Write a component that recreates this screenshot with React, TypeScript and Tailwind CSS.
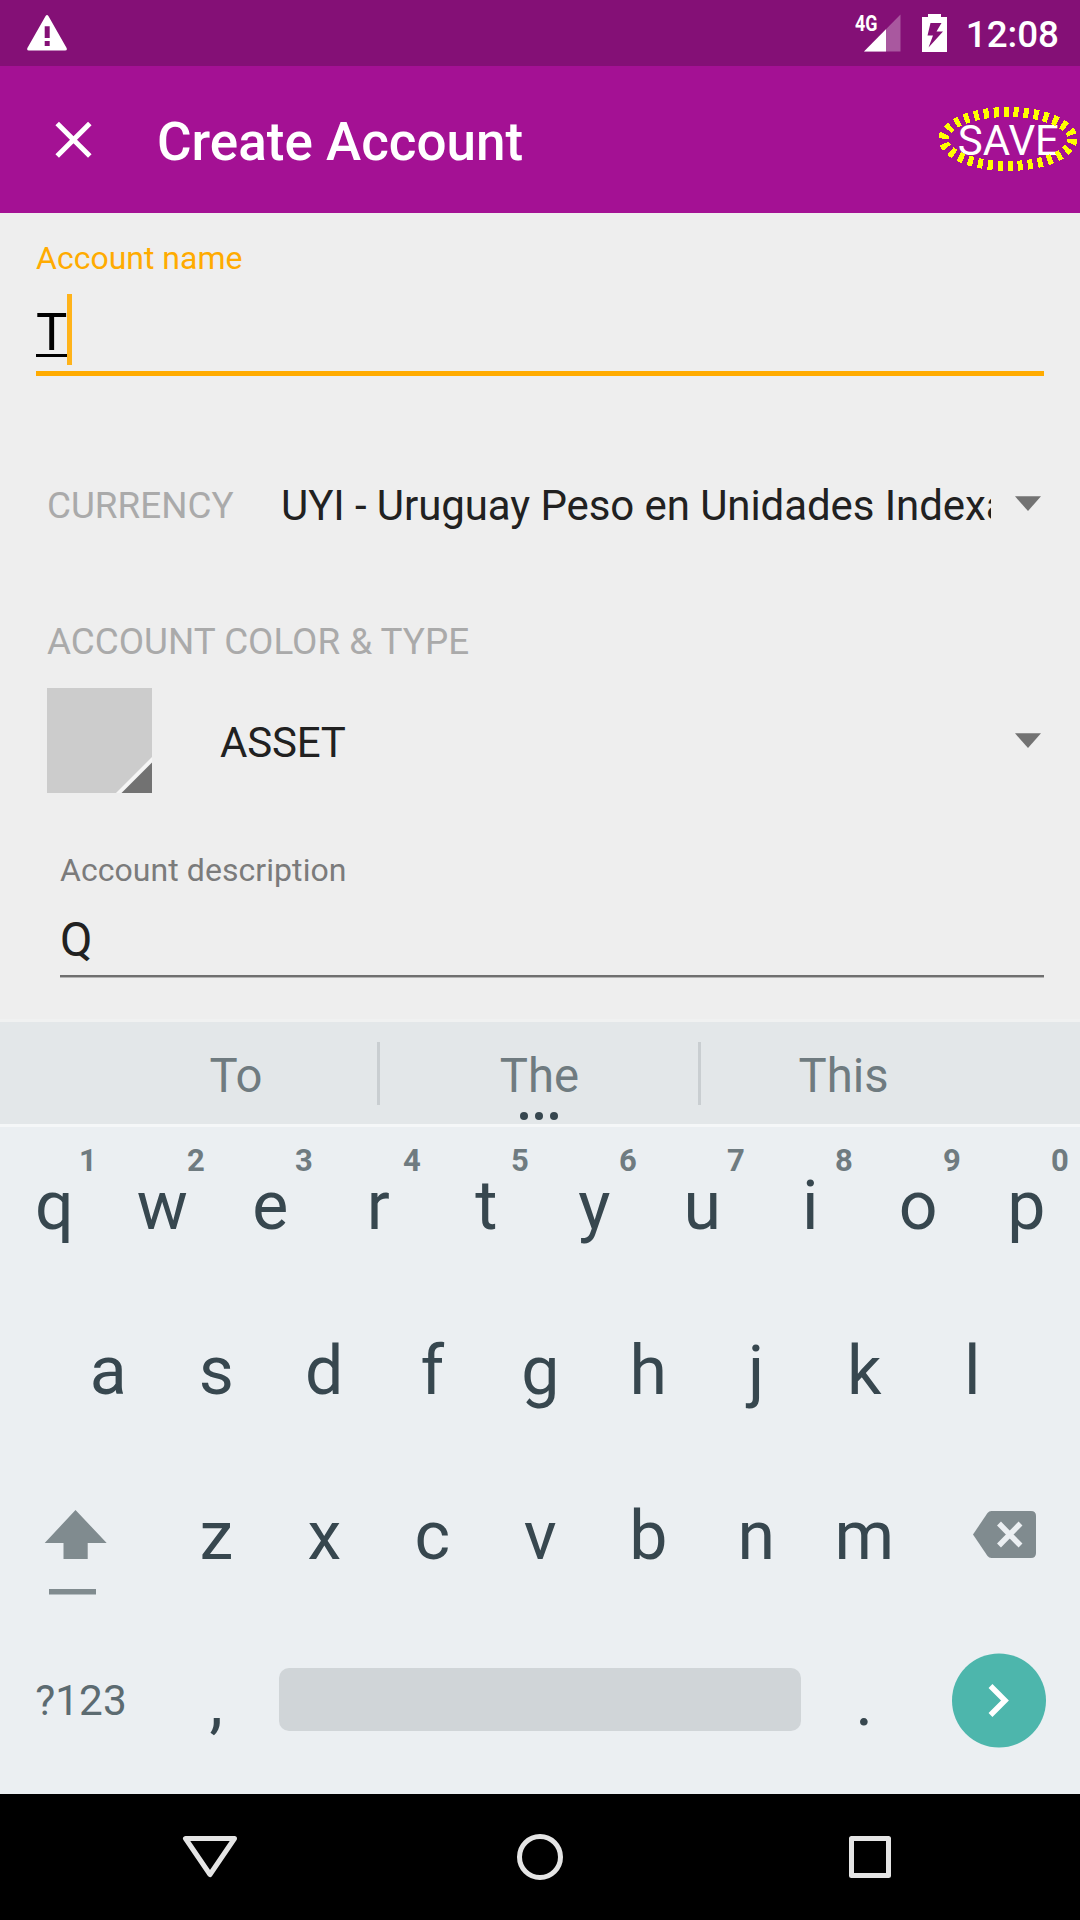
import React from "react";

const TOP_ROW = ["q", "w", "e", "r", "t", "y", "u", "i", "o", "p"];
const HINTS = ["1", "2", "3", "4", "5", "6", "7", "8", "9", "0"];
const HOME_ROW = ["a", "s", "d", "f", "g", "h", "j", "k", "l"];
const BOTTOM_ROW = ["z", "x", "c", "v", "b", "n", "m"];

function StatusBar() {
  return (
    <div className="flex h-[66px] items-start bg-[#841076] text-white">
      <svg className="ml-[27px] mt-[15px]" width="40" height="36" viewBox="0 0 40 36">
        <path
          fill="#fff"
          fillRule="evenodd"
          d="M18.6 1Q20 -1 21.4 1L39.6 33Q40.6 35.600 38 35.600H2Q-.6 35.600 .4 33ZM17.700 11.300V23H22.700V11.300ZM17.700 26V31H22.700V26Z"
        />
      </svg>
      <div className="ml-auto flex items-start">
        <span className="mt-[12px] w-[22px] origin-left scale-x-[0.83] whitespace-nowrap text-[21.500px] font-bold leading-[24px]">
          4G
        </span>
        <svg className="-ml-[13px] mt-[14px]" width="37" height="38" viewBox="0 0 37 38">
          <path fill="#fff" fillOpacity="0.3" d="M0 37.500L36.500 0.500V37.500Z" />
          <path fill="#fff" d="M0 37.500L22 15.200V37.500Z" />
        </svg>
        <svg className="ml-[21px] mt-[14px]" width="25" height="38" viewBox="0 0 25 38">
          <path
            fill="#fff"
            fillRule="evenodd"
            d="M6 0H19V3H25V38H0V3H6ZM8.500 9H19.500L14.500 17.500H21L6.500 33.500L11 21.500H5.500Z"
          />
        </svg>
        <span className="ml-[19px] mr-[21px] mt-[13px] text-[36.750px] font-medium leading-[43px]">12:08</span>
      </div>
    </div>
  );
}

function AppBar() {
  return (
    <div className="flex h-[147px] items-center bg-[#a41194] text-white">
      <svg className="ml-[55px]" width="38" height="38" viewBox="0 0 38 38">
        <path d="M2.200 2.500L34.800 35.100M34.800 2.500L2.200 35.100" stroke="#fff" strokeWidth="5" />
      </svg>
      <h1 className="ml-[64px] pt-[4px] text-[53px] font-medium leading-[60px]">Create Account</h1>
      <div className="relative ml-auto mr-[21px] pt-[2px] text-[42px] leading-[50px]">
        SAVE
        <svg className="absolute -right-[19px] -top-[8px]" width="140" height="66" viewBox="0 0 140 66">
          <ellipse
            cx="70"
            cy="33"
            rx="64.500"
            ry="27"
            fill="none"
            stroke="#ff0"
            strokeWidth="10"
            strokeDasharray="5 5"
            shapeRendering="crispEdges"
          />
        </svg>
      </div>
    </div>
  );
}

function DropArrow() {
  return (
    <svg className="shrink-0" width="26" height="15" viewBox="0 0 26 15">
      <path fill="#727272" d="M0 0.300H26L13 15Z" />
    </svg>
  );
}

function AccountForm() {
  return (
    <div className="flex h-[806px] flex-col bg-[#eee] pt-[27px] text-[#212121]">
      <label className="ml-[36px] text-[32px] leading-[36px] text-[#ffab00]">Account name</label>
      <div className="ml-[36px] mt-[18px] flex h-[71px] items-start">
        <span className="h-[63px] w-[32px] border-b-[3px] border-black text-[52.500px] leading-[76px] text-black">T</span>
        <span className="-ml-px h-[71px] w-[5px] bg-[#ffb31a]" />
      </div>
      <div className="mx-[36px] mt-[6px] h-[5px] shrink-0 bg-[#ffab00]" />

      <div className="ml-[47px] mr-[39px] mt-[100px] flex h-[60px] shrink-0 items-start">
        <span className="w-[234px] text-[36.850px] leading-[60px] text-[#aaa]">CURRENCY</span>
        <span className="w-[710px] overflow-hidden whitespace-nowrap text-[42px] leading-[60px] tracking-[-0.080px]">
          UYI - Uruguay Peso en Unidades Indexa
        </span>
        <span className="ml-auto mt-[20px]">
          <DropArrow />
        </span>
      </div>

      <div className="ml-[47px] mt-[84px] text-[36.850px] leading-[44px] text-[#aaa]">ACCOUNT COLOR &amp; TYPE</div>
      <div className="ml-[47px] mr-[39px] mt-[24px] flex h-[105px] shrink-0 items-center">
        <svg width="105" height="105" viewBox="0 0 105 105">
          <path fill="#ccc" d="M0 0H105V105H0Z" />
          <path fill="#f5f5f5" d="M105 69V105H69Z" />
          <path fill="#727272" d="M105 74.500V105H74.500Z" />
        </svg>
        <span className="ml-[68px] pt-[4px] text-[42px] leading-[50px] tracking-[-0.200px]">ASSET</span>
        <span className="ml-auto">
          <DropArrow />
        </span>
      </div>

      <label className="ml-[60px] mt-[59px] text-[32px] leading-[36px] tracking-[0.060px] text-[#7b7b7b]">
        Account description
      </label>
      <div className="ml-[60px] mt-[22px] text-[47.250px] leading-[60px]">Q</div>
      <div className="ml-[60px] mr-[36px] mt-[5px] h-[2px] shrink-0 bg-[#6f6f6f] shadow-[0_1px_0_#b4b4b4]" />
    </div>
  );
}

function Suggestions() {
  return (
    <div className="relative flex h-[108px] items-start border-y-[3px] border-t-[#f0f1f1] border-b-[#f5f7f8] bg-[#e3e7e9] pl-[94px] text-[47.250px] leading-[108px] text-[#6f7b80]">
      <span className="w-[283px] pl-px text-center">To</span>
      <span className="mt-[20px] h-[63px] w-[3px] bg-[#c9ced1]" />
      <span className="w-[318px] pl-px text-center">The</span>
      <span className="mt-[20px] h-[63px] w-[3px] bg-[#c9ced1]" />
      <span className="w-[285px] text-center">This</span>
      <div className="absolute bottom-[4px] left-[520px] flex gap-[7px]">
        <i className="size-[8px] rounded-full bg-[#37474f]" />
        <i className="size-[8px] rounded-full bg-[#37474f]" />
        <i className="size-[8px] rounded-full bg-[#37474f]" />
      </div>
    </div>
  );
}

function Key({ label, hint }: { label: string; hint?: string }) {
  return (
    <div className="relative w-[108px] pl-[0.5px] text-center">
      {label}
      {hint && (
        <span className="absolute left-[68px] top-[16px] w-[40px] text-center text-[31px] font-bold leading-[36px] text-[#6f7b80]">
          {hint}
        </span>
      )}
    </div>
  );
}

function Keyboard() {
  return (
    <div className="h-[667px] bg-[#ebeff2] text-[68px] text-[#37474f]">
      <div className="flex h-[162px] leading-[158px]">
        {TOP_ROW.map((k, i) => (
          <Key key={k} label={k} hint={HINTS[i]} />
        ))}
      </div>
      <div className="flex h-[165px] justify-center leading-[164px]">
        {HOME_ROW.map((k) => (
          <Key key={k} label={k} />
        ))}
      </div>
      <div className="flex h-[165px] leading-[164px]">
        <div className="w-[162px] pl-[44px] pt-[56px]">
          <svg width="64" height="86" viewBox="0 0 64 86">
            <path fill="#808b8f" d="M31.500 0L62.700 33H43.700V49H19.500V33H0.700ZM5 79H52V84.500H5Z" />
          </svg>
        </div>
        {BOTTOM_ROW.map((k) => (
          <Key key={k} label={k} />
        ))}
        <div className="w-[162px] pl-[55px] pt-[57px]">
          <svg width="63" height="47" viewBox="0 0 63 47">
            <path fill="#808b8f" d="M0 23.500L14.500 2Q16 0 18.500 0H58Q63 0 63 5V42Q63 47 58 47H18.500Q16 47 14.500 45Z" />
            <path d="M26 12.500L47.500 34.500M47.500 12.500L26 34.500" stroke="#ebeff2" strokeWidth="5.500" />
          </svg>
        </div>
      </div>
      <div className="flex h-[165px] items-center">
        <div className="w-[162px] pb-[2px] text-center text-[42.300px] leading-[50px] text-[#5c6b71]">?123</div>
        <Key label="," />
        <div className="mx-[9px] mb-[4px] h-[63px] w-[522px] rounded-[10px] bg-[#d0d5d8]" />
        <Key label="." />
        <div className="flex w-[162px] justify-center pb-[3px]">
          <svg width="94" height="95" viewBox="0 0 94 95">
            <circle cx="47" cy="47.500" r="47" fill="#4db6ac" />
            <path d="M38.500 33L53 47.500L38.500 62" fill="none" stroke="#fff" strokeWidth="5.500" />
          </svg>
        </div>
      </div>
    </div>
  );
}

function NavBar() {
  return (
    <div className="flex h-[126px] items-center bg-black">
      <div className="ml-[180px] flex w-[720px] items-center justify-between">
        <svg className="-mt-[3px]" width="60" height="48" viewBox="0 0 60 48">
          <path d="M5.500 6.500H54.500L30 42.500Z" fill="none" stroke="#e5e5e5" strokeWidth="5" strokeLinejoin="round" />
        </svg>
        <svg width="48" height="48" viewBox="0 0 48 48">
          <circle cx="24" cy="24" r="20.500" fill="none" stroke="#e5e5e5" strokeWidth="5" />
        </svg>
        <svg width="60" height="48" viewBox="0 0 60 48">
          <path d="M11.500 5.500H48.500V42.500H11.500Z" fill="none" stroke="#e5e5e5" strokeWidth="5" strokeLinejoin="round" />
        </svg>
      </div>
    </div>
  );
}

export default function App() {
  return (
    <main className="flex h-[1920px] w-[1080px] flex-col overflow-hidden font-[Roboto,sans-serif]">
      <StatusBar />
      <AppBar />
      <AccountForm />
      <Suggestions />
      <Keyboard />
      <NavBar />
    </main>
  );
}
